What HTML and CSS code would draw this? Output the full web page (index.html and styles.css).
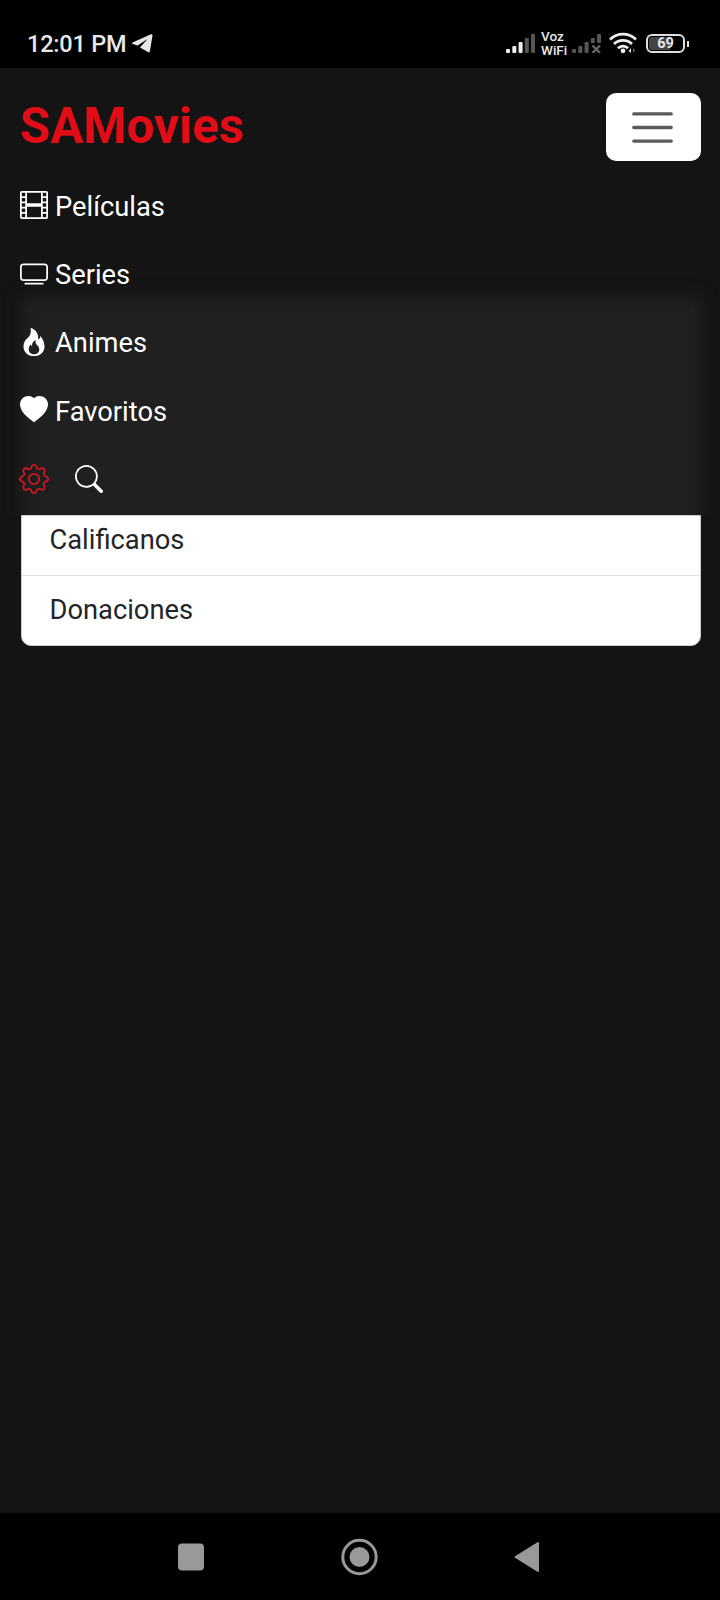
FILE: index.html
```html
<!DOCTYPE html>
<html lang="es">
<head>
    <meta charset="UTF-8">
    <meta name="viewport" content="width=device-width, initial-scale=1.0">
    <title>SAMovies</title>
    <link rel="stylesheet" href="styles.css">
</head>
<body>

    <div class="status-bar">
        <div class="status-left">
            <span class="clock">12:01 PM</span>
            <svg class="telegram" viewBox="0 0 21 19"><path d="M0.5 8.6 19 .3c1-.4 1.700.2 1.500 1.200l-2.600 15.700c-.2 1.200-1 1.500-2 .8L8 13.500 15.500 5 5.500 11.500.8 10c-.8-.3-.9-1.100-.3-1.400z"/></svg>
        </div>
        <div class="status-right">
            <svg class="signal" viewBox="0 0 29 19">
                <g fill="#eee"><rect x="0" y="15" width="4" height="4" rx="1"/><rect x="6.300" y="12" width="4" height="7" rx="1"/><rect x="12.600" y="8" width="4" height="11" rx="1"/></g>
                <g fill="#555"><rect x="18.800" y="4" width="4" height="15" rx="1"/><rect x="25" y="0" width="4" height="19" rx="1"/></g>
            </svg>
            <div class="vowifi"><span>Voz</span><span>WiFi</span></div>
            <svg class="signal" viewBox="0 0 29 19">
                <g fill="#555"><rect x="0" y="15" width="4" height="4" rx="1"/><rect x="6.300" y="12" width="4" height="7" rx="1"/><rect x="12.600" y="8" width="4" height="11" rx="1"/><rect x="18.800" y="4" width="4" height="5" rx="1"/><rect x="25" y="0" width="4" height="9" rx="1"/></g>
                <path d="M20.500 11.500l7.500 7.500m0-7.500l-7.500 7.500" stroke="#666" stroke-width="2.400"/>
            </svg>
            <svg class="wifi" viewBox="0 0 28 22">
                <g fill="none" stroke="#eee" stroke-width="2.800"><path d="M1 7.500a18.500 18.500 0 0 1 26 0"/><path d="M5 12a12.800 12.800 0 0 1 18 0"/><path d="M9 16.300a7 7 0 0 1 10 0"/></g>
                <circle cx="14" cy="18.800" r="2.400" fill="#eee"/>
                <path d="M19.500 19l2.500 2V16z" fill="#ddd"/><path d="M24 21v-5l2 2.500z" fill="#666"/>
            </svg>
            <div class="battery"><span>69</span></div>
        </div>
    </div>

    <header class="navbar">
        <div class="navbar-top">
            <a class="brand">SAMovies</a>
            <button class="toggler" aria-label="Menu">
                <svg viewBox="0 0 30 30"><path stroke="#5a5b5d" stroke-linecap="round" stroke-width="2" d="M4 7h22M4 15h22M4 23h22"/></svg>
            </button>
        </div>

        <nav class="nav-links">
            <a class="nav-link">
                <svg class="icon" viewBox="0 0 16 16"><path d="M0 1a1 1 0 0 1 1-1h14a1 1 0 0 1 1 1v14a1 1 0 0 1-1 1H1a1 1 0 0 1-1-1V1zm4 0v6h8V1H4zm8 8H4v6h8V9zM1 1v2h2V1H1zm2 3H1v2h2V4zM1 7v2h2V7H1zm2 3H1v2h2v-2zm-2 3v2h2v-2H1zM15 1h-2v2h2V1zm-2 3v2h2V4h-2zm2 3h-2v2h2V7zm-2 3v2h2v-2h-2zm2 3h-2v2h2v-2z"/></svg>
                <span>Películas</span>
            </a>
            <a class="nav-link">
                <svg class="icon" viewBox="0 0 16 16"><path d="M2.5 13.5A.5.5 0 0 1 3 13h10a.5.5 0 0 1 0 1H3a.5.5 0 0 1-.5-.5zM13.991 3l.024.001a1.46 1.46 0 0 1 .538.143.757.757 0 0 1 .302.254c.067.1.145.277.145.602v5.991l-.001.024a1.464 1.464 0 0 1-.143.538.758.758 0 0 1-.254.302c-.1.067-.277.145-.602.145H2.009l-.024-.001a1.464 1.464 0 0 1-.538-.143.758.758 0 0 1-.302-.254C1.078 10.502 1 10.325 1 10V4.009l.001-.024a1.46 1.46 0 0 1 .143-.538.758.758 0 0 1 .254-.302C1.498 3.078 1.675 3 2 3h11.991zM14 2H2C0 2 0 4 0 4v6c0 2 2 2 2 2h12c2 0 2-2 2-2V4c0-2-2-2-2-2z"/></svg>
                <span>Series</span>
            </a>
            <a class="nav-link">
                <svg class="icon" viewBox="0 0 16 16"><path d="M8 16c3.314 0 6-2 6-5.5 0-1.5-.5-4-2.5-6 .25 1.5-1.25 2-1.25 2C11 4 9 .5 6 0c.357 2 .5 4-2 6-1.25 1-2 2.729-2 4.500C2 14 4.686 16 8 16Zm0-1c-1.657 0-3-1-3-2.750 0-.75.25-2 1.250-3C6.125 10 7 10.500 7 10.500c-.375-1.250.5-3.250 2-3.500-.179 1-.25 2 1 3 .625.5 1 1.364 1 2.250C11 14 9.657 15 8 15Z"/></svg>
                <span>Animes</span>
            </a>
            <a class="nav-link">
                <svg class="icon" viewBox="0 0 16 16"><path fill-rule="evenodd" d="M8 1.314C12.438-3.248 23.534 4.735 8 15-7.534 4.736 3.562-3.248 8 1.314z"/></svg>
                <span>Favoritos</span>
            </a>
            <div class="nav-tools">
                <svg class="icon gear" viewBox="0 0 16 16"><path d="M8 4.754a3.246 3.246 0 1 0 0 6.492 3.246 3.246 0 0 0 0-6.492zM5.754 8a2.246 2.246 0 1 1 4.492 0 2.246 2.246 0 0 1-4.492 0z"/><path d="M9.796 1.343c-.527-1.790-3.065-1.790-3.592 0l-.094.319a.873.873 0 0 1-1.255.520l-.292-.160c-1.640-.892-3.433.902-2.540 2.541l.159.292a.873.873 0 0 1-.520 1.255l-.319.094c-1.790.527-1.790 3.065 0 3.592l.319.094a.873.873 0 0 1 .520 1.255l-.160.292c-.892 1.640.901 3.434 2.541 2.540l.292-.159a.873.873 0 0 1 1.255.520l.094.319c.527 1.790 3.065 1.790 3.592 0l.094-.319a.873.873 0 0 1 1.255-.520l.292.160c1.640.893 3.434-.902 2.540-2.541l-.159-.292a.873.873 0 0 1 .520-1.255l.319-.094c1.790-.527 1.790-3.065 0-3.592l-.319-.094a.873.873 0 0 1-.520-1.255l.160-.292c.893-1.640-.902-3.433-2.541-2.540l-.292.159a.873.873 0 0 1-1.255-.520l-.094-.319zm-2.633.283c.246-.835 1.428-.835 1.674 0l.094.319a1.873 1.873 0 0 0 2.693 1.115l.291-.160c.764-.415 1.600.420 1.184 1.185l-.159.292a1.873 1.873 0 0 0 1.116 2.692l.318.094c.835.246.835 1.428 0 1.674l-.319.094a1.873 1.873 0 0 0-1.115 2.693l.160.291c.415.764-.420 1.600-1.185 1.184l-.291-.159a1.873 1.873 0 0 0-2.693 1.116l-.094.318c-.246.835-1.428.835-1.674 0l-.094-.319a1.873 1.873 0 0 0-2.692-1.115l-.292.160c-.764.415-1.600-.420-1.184-1.185l.159-.291A1.873 1.873 0 0 0 1.945 8.930l-.319-.094c-.835-.246-.835-1.428 0-1.674l.319-.094A1.873 1.873 0 0 0 3.060 4.377l-.160-.292c-.415-.764.420-1.600 1.185-1.184l.292.159a1.873 1.873 0 0 0 2.692-1.115l.094-.319z"/></svg>
                <svg class="icon" viewBox="0 0 16 16"><path d="M11.742 10.344a6.500 6.500 0 1 0-1.397 1.398h-.001c.030.040.062.078.098.115l3.850 3.850a1 1 0 0 0 1.415-1.414l-3.850-3.850a1.007 1.007 0 0 0-.115-.100zM12 6.500a5.500 5.500 0 1 1-11 0 5.500 5.500 0 0 1 11 0z"/></svg>
            </div>
        </nav>
    </header>

    <main>
        <ul class="list-group">
            <li>Calificanos</li>
            <li>Donaciones</li>
        </ul>
    </main>

    <footer class="system-nav">
        <svg viewBox="0 0 40 40"><rect x="7" y="6.500" width="26" height="27" rx="4" fill="#999"/></svg>
        <svg viewBox="0 0 40 40"><circle cx="20.500" cy="20" r="16.700" fill="none" stroke="#999" stroke-width="3"/><circle cx="20.500" cy="20" r="10" fill="#999"/></svg>
        <svg viewBox="0 0 40 40"><path d="M8.500 20 31 6v28z" fill="#999" stroke="#999" stroke-width="2" stroke-linejoin="round"/></svg>
    </footer>

</body>
</html>
```

FILE: styles.css
```css
* {
    box-sizing: border-box;
}

body {
    margin: 0;
    height: 1600px;
    display: flex;
    flex-direction: column;
    background-color: #141414;
    color: #fff;
    font-family: Roboto, sans-serif;
    font-size: 27.3px;
    line-height: 41px;
    overflow: hidden;
}

/* Barra de estado */
.status-bar {
    height: 68px;
    padding: 18px 31px 0 27px;
    display: flex;
    justify-content: space-between;
    background: #000;
    color: #e8e8e8;
}

.status-left,
.status-right {
    display: flex;
    align-items: center;
    height: 50px;
}

.clock {
    padding-top: 2px;
    font-size: 23.5px;
    font-weight: 500;
    letter-spacing: -0.2px;
}

.telegram {
    width: 21px;
    height: 19px;
    margin: 1px 0 0 6px;
    fill: #e8e8e8;
}

.signal {
    width: 29px;
    height: 19px;
}

.vowifi {
    display: flex;
    flex-direction: column;
    width: 26px;
    margin: 0 5px 0 6px;
    font-size: 13.5px;
    font-weight: 500;
    line-height: 14px;
}

.wifi {
    width: 28px;
    height: 22px;
    margin: 0 9px 0 8px;
}

.battery {
    position: relative;
    width: 39px;
    height: 19px;
    margin-right: 4px;
    border: 2px solid #ddd;
    border-radius: 6px;
    background: linear-gradient(to right, #444 62%, #000 62%);
    background-clip: content-box;
    padding: 1px;
    font-size: 14.5px;
    font-weight: 700;
    line-height: 14px;
    text-align: center;
}

.battery::after {
    content: "";
    position: absolute;
    right: -6px;
    top: 5px;
    width: 2px;
    height: 6px;
    background: #ddd;
}

/* Menu */
.navbar {
    position: relative;
    height: 447px;
    padding: 25px 19px 0 20px;
    overflow: hidden;
}

.navbar::before {
    content: "";
    position: absolute;
    left: 21px;
    right: 19px;
    top: 228px;
    height: 300px;
    background: #202020;
    filter: blur(8px);
}

.navbar-top,
.nav-links {
    position: relative;
}

.navbar-top {
    display: flex;
    justify-content: space-between;
    align-items: center;
    height: 68px;
}

.brand {
    padding-bottom: 2px;
    color: #e20c16;
    font-size: 49.4px;
    font-weight: 700;
}

.toggler {
    display: flex;
    justify-content: center;
    align-items: center;
    width: 95px;
    height: 68px;
    padding: 0 2px 0 0;
    border: none;
    border-radius: 10px;
    background: #fff;
}

.toggler svg {
    width: 51px;
    height: 51px;
}

.nav-links {
    padding-top: 10px;
}

.nav-link {
    display: flex;
    align-items: center;
    gap: 7px;
    height: 68.4px;
}

.nav-link span {
    padding-top: 4px;
}

.icon {
    width: 28px;
    height: 28px;
    fill: #fff;
}

.nav-tools {
    display: flex;
    align-items: center;
    gap: 27px;
    height: 69px;
}

.gear {
    width: 30px;
    height: 30px;
    margin: 0 -1px;
    fill: #cc1622;
}

/* Opciones */
main {
    flex: 1;
    padding: 0 19px 0 21px;
}

.list-group {
    margin: 0;
    padding: 0;
    list-style: none;
    background: #fff;
    color: #212529;
    border: 1px solid #ccc;
    border-radius: 0 0 10px 10px;
}

.list-group li {
    height: 69px;
    padding: 14px 27.5px;
}

.list-group li:first-child {
    height: 60px;
    padding-top: 4px;
    border-bottom: 1px solid #dfdfdf;
}

/* Botones del sistema */
.system-nav {
    display: flex;
    justify-content: center;
    align-items: center;
    gap: 128px;
    height: 87px;
    padding-right: 2px;
    background: #000;
}

.system-nav svg {
    width: 40px;
    height: 40px;
}
```
